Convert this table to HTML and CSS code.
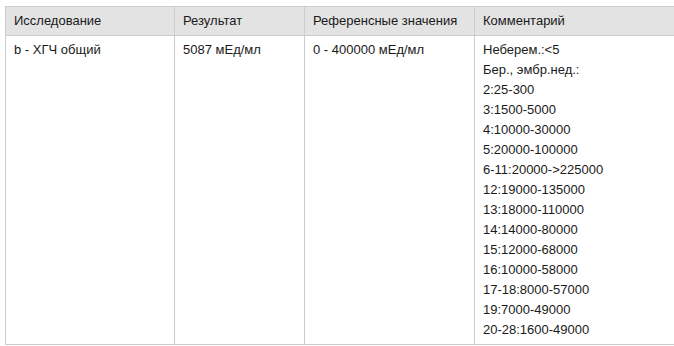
FILE: index.html
```html
<!DOCTYPE html>
<html lang="ru">
<head>
<meta charset="utf-8">
<link rel="stylesheet" href="styles.css">
</head>
<body>
<table class="results">
  <colgroup>
    <col class="c1"><col class="c2"><col class="c3"><col class="c4">
  </colgroup>
  <thead>
    <tr>
      <th>Исследование</th>
      <th>Результат</th>
      <th>Референсные значения</th>
      <th class="last">Комментарий</th>
    </tr>
  </thead>
  <tbody>
    <tr>
      <td>b - ХГЧ общий</td>
      <td>5087 мЕд/мл</td>
      <td>0 - 400000 мЕд/мл</td>
      <td class="last">Неберем.:&lt;5<br>Бер., эмбр.нед.:<br>2:25-300<br>3:1500-5000<br>4:10000-30000<br>5:20000-100000<br>6-11:20000-&gt;225000<br>12:19000-135000<br>13:18000-110000<br>14:14000-80000<br>15:12000-68000<br>16:10000-58000<br>17-18:8000-57000<br>19:7000-49000<br>20-28:1600-49000</td>
    </tr>
  </tbody>
</table>
</body>
</html>
```
FILE: styles.css
```css
body {
  margin: 6px 0 0 5px;
  background: #fff;
  font-family: "Liberation Sans", Arial, sans-serif;
  font-size: 13px;
  color: #1a1a1a;
}
.results {
  border-collapse: collapse;
  width: 669px;
  table-layout: fixed;
}
.c1 { width: 169px; }
.c2 { width: 130px; }
.c3 { width: 170px; }
.c4 { width: 200px; }
.results th,
.results td {
  border: 1px solid #cccccc;
  padding: 4px 8px;
  line-height: 20px;
  text-align: left;
  vertical-align: top;
  font-weight: normal;
}
.results .last {
  border-right: none;
}
.results th {
  background: #e3e3e3;
}
```
